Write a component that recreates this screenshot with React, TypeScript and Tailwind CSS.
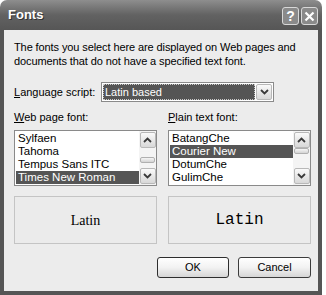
import React from "react";

const ui = { fontFamily: '"Liberation Sans", Arial, sans-serif' };

function Chevron({ up }: { up?: boolean }) {
  return (
    <svg width="9" height="6" viewBox="0 0 9 6">
      <path
        d={up ? "M1 5 L4.5 1.5 L8 5" : "M1 1 L4.5 4.5 L8 1"}
        fill="none"
        stroke="#3a3a3a"
        strokeWidth="1.8"
      />
    </svg>
  );
}

function ArrowButton({ up }: { up?: boolean }) {
  return (
    <div className="flex h-[16px] w-[16px] shrink-0 items-center justify-center rounded-[2px] border border-[#b8b8b8] bg-gradient-to-b from-[#fafafa] to-[#d8d8d8]">
      <Chevron up={up} />
    </div>
  );
}

function Scrollbar({ thumbTop }: { thumbTop: number }) {
  return (
    <div className="flex w-[17px] flex-col items-center justify-between bg-[#f4f4f4] py-[1px]">
      <ArrowButton up />
      <div className="relative w-full flex-1">
        <div
          className="absolute left-[1px] h-[6px] w-[15px] rounded-[2px] border border-[#b0b0b0] bg-gradient-to-b from-[#f6f6f6] to-[#d4d4d4]"
          style={{ top: thumbTop }}
        />
      </div>
      <ArrowButton />
    </div>
  );
}

function ListBox({
  items,
  selected,
  thumbTop,
}: {
  items: string[];
  selected: number;
  thumbTop: number;
}) {
  return (
    <div className="flex h-[56px] w-[143px] border border-[#8a8a8a] bg-white">
      <div className="flex-1 pl-[1px] pt-[1px]">
        {items.map((item, i) => (
          <div
            key={item}
            className={
              "h-[13px] whitespace-nowrap pl-[2px] text-[11.5px] leading-[13px] " +
              (i === selected ? "bg-[#555555] text-white" : "text-black")
            }
          >
            {item}
          </div>
        ))}
      </div>
      <Scrollbar thumbTop={thumbTop} />
    </div>
  );
}

function Preview({ mono }: { mono?: boolean }) {
  return (
    <div className="flex h-[48px] w-[143px] items-center justify-center border border-[#c4c4c4] bg-[#ebebeb]">
      {mono ? (
        <span
          className="text-[16px] text-black"
          style={{ fontFamily: '"Liberation Mono", "Courier New", monospace' }}
        >
          Latin
        </span>
      ) : (
        <span
          className="text-[14px] text-black"
          style={{ fontFamily: '"Liberation Serif", "Times New Roman", serif' }}
        >
          Latin
        </span>
      )}
    </div>
  );
}

function PushButton({ label, def }: { label: string; def?: boolean }) {
  return (
    <button
      className={
        "flex h-[21px] items-center justify-center rounded-[3px] border bg-gradient-to-b from-[#ffffff] via-[#f2f2f2] to-[#d6d6d6] text-[11px] text-black " +
        (def ? "w-[72px] border-[#2e2e2e]" : "w-[73px] border-[#3c3c3c]")
      }
    >
      {label}
    </button>
  );
}

export default function App() {
  return (
    <div className="h-[295px] w-[326px] overflow-hidden bg-white" style={ui}>
      <div className="flex h-[295px] w-[322px] flex-col">
        {/* Title bar */}
        <div className="flex h-[30px] shrink-0 items-center justify-between rounded-t-[7px] bg-gradient-to-b from-[#8e8e8e] via-[#626262] to-[#565656] pl-[8px] pr-[4px]">
          <span
            className="text-[13px] font-bold text-white"
            style={{ textShadow: "1px 1px 0 #333" }}
          >
            Fonts
          </span>
          <div className="flex gap-[2px] pt-[2px]">
            <div className="flex h-[18px] w-[17px] items-center justify-center rounded-[3px] border border-[#d8d8d8] bg-[#8a8a8a] text-[14px] font-bold leading-none text-white">
              ?
            </div>
            <div className="flex h-[18px] w-[17px] items-center justify-center rounded-[3px] border border-[#d8d8d8] bg-[#8a8a8a]">
              <svg width="11" height="11" viewBox="0 0 11 11">
                <path d="M1.5 1.5 L9.5 9.5 M9.5 1.5 L1.5 9.5" stroke="#fff" strokeWidth="2.2" />
              </svg>
            </div>
          </div>
        </div>

        {/* Body */}
        <div className="flex min-h-0 flex-1 flex-col border-x-4 border-b-4 border-[#555555] bg-[#ececec] pl-[10px] pr-[7px] pt-[10px] text-[11px] text-black">
          <p className="whitespace-nowrap leading-[14px] tracking-[-0.1px]">
            The fonts you select here are displayed on Web pages and
            <br />
            documents that do not have a specified text font.
          </p>

          <div className="mt-[14px] flex items-center">
            <span className="w-[87px] whitespace-nowrap">
              <span className="underline">L</span>anguage script:
            </span>
            <div className="flex h-[20px] w-[173px] items-center border border-[#8a8a8a] bg-white p-[1px]">
              <div className="mr-[1px] flex h-full flex-1 items-center border border-dotted border-[#c8c8c8] bg-[#555555] pl-[1px] text-white">
                Latin based
              </div>
              <ArrowButton />
            </div>
          </div>

          <div className="mt-[8px] flex gap-[11px]">
            <div className="flex flex-col gap-[6px]">
              <span className="leading-[14px]">
                <span className="underline">W</span>eb page font:
              </span>
              <ListBox
                items={["Sylfaen", "Tahoma", "Tempus Sans ITC", "Times New Roman"]}
                selected={3}
                thumbTop={9}
              />
            </div>
            <div className="flex flex-col gap-[6px]">
              <span className="leading-[14px]">
                <span className="underline">P</span>lain text font:
              </span>
              <ListBox
                items={["BatangChe", "Courier New", "DotumChe", "GulimChe"]}
                selected={1}
                thumbTop={0}
              />
            </div>
          </div>

          <div className="mt-[10px] flex gap-[11px]">
            <Preview />
            <Preview mono />
          </div>

          <div className="mt-[13px] flex justify-end gap-[9px]">
            <PushButton label="OK" def />
            <PushButton label="Cancel" />
          </div>
        </div>
      </div>
    </div>
  );
}
